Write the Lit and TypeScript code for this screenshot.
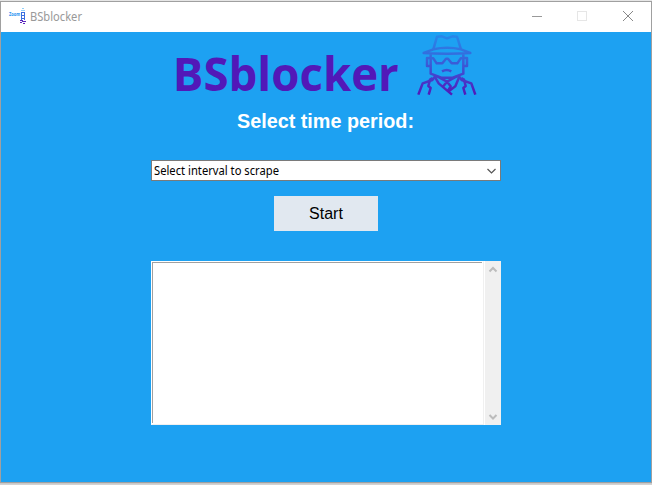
import { LitElement, html, css } from "lit";
import { customElement } from "lit/decorators.js";

@customElement("title-bar")
class TitleBar extends LitElement {
  static styles = css`
    :host { display: flex; height: 30px; background: #fff; flex: none; }
    svg { display: block; }
    .icon { margin: 6px 4px 0 7px; flex: none; }
    .title { flex: 1; }
    .name { font: 12px "Noto Sans", sans-serif; fill: #999; }
    .mini { font: bold 6px "Noto Sans", sans-serif; fill: #1d90f0; }
  `;
  render() {
    return html`
      <svg class="icon" width="18" height="18" viewBox="0 0 18 18">
        <text class="mini" x="1" y="8.3" textLength="11" lengthAdjust="spacingAndGlyphs">Zoom</text>
        <path d="M14 0.5h2M13 2.5h4" stroke="#8fd0fa" />
        <path d="M13 4.5h4M13.5 4v8M16.5 4v8M13 7.5h4M13 10.5h4" stroke="#3b6fe0" fill="none" />
        <path d="M12 12.5h3M14 13.5h4M12 14.5h2M15 15.5h2" stroke="#5b25bd" />
      </svg>
      <svg class="title" height="30">
        <text class="name" x="0" y="19" textLength="52" lengthAdjust="spacingAndGlyphs">BSblocker</text>
      </svg>
      <svg width="138" height="30" viewBox="513 2 138 30" fill="none">
        <path d="M532 16.5h10" stroke="#999" />
        <rect x="577.5" y="11.5" width="9" height="9" stroke="#e6e6e6" />
        <path d="M623 11l10 10M633 11l-10 10" stroke="#888" />
      </svg>
    `;
  }
}

@customElement("brand-logo")
class BrandLogo extends LitElement {
  static styles = css`
    :host { display: flex; height: 70px; padding-right: 5px; }
    svg { display: block; overflow: visible; }
    .word { font: bold 46px "Open Sans", sans-serif; fill: #5218b8; }
  `;
  render() {
    return html`
      <svg width="247" height="70">
        <text class="word" x="7.8" y="59.3" textLength="226" lengthAdjust="spacingAndGlyphs">BSblocker</text>
      </svg>
      <svg width="70" height="66" viewBox="0 0 210 198" fill="none" stroke="url(#ink)" stroke-width="7.5" stroke-linejoin="round" stroke-linecap="butt">
        <defs>
          <linearGradient id="ink" gradientUnits="userSpaceOnUse" x1="0" y1="10" x2="0" y2="188">
            <stop offset="0" stop-color="#2788ea" />
            <stop offset=".35" stop-color="#346bdd" />
            <stop offset=".7" stop-color="#4540cc" />
            <stop offset="1" stop-color="#5218b8" />
          </linearGradient>
        </defs>
        <path d="M64 52L75 14L90 13L105 19L121 13L135 14L147 52" />
        <path d="M64 52Q105 43 147 52L175 63Q105 67 35 63Z" />
        <path d="M56 67V125L88 137H122L154 125V67" />
        <path d="M56 78H45V102H56M154 78H165V102H154" />
        <path d="M58 79L64 79L74 94H91L102 80H108L119 94H136L146 79H152" />
        <path d="M90 118Q104 110 118 118" />
        <path d="M70 132L61 144L32 154L19 188M140 132L149 144L178 154L190 188" />
        <path d="M62 138L54 143L49 162L56 168L50 188M148 138L156 143L161 162L154 168L160 188" />
        <path d="M68 134L80 154L120 188M73 132L105 149L137 132M142 134L130 163L112 176M105 149L94 163M105 149L116 163L108 176" />
      </svg>
    `;
  }
}

@customElement("app-root")
class AppRoot extends LitElement {
  static styles = css`
    :host { display: block; box-sizing: border-box; height: 485px; padding-top: 1px; overflow: hidden; background: linear-gradient(#e6e6e6 0 1px, #bbb 1px 483px, #c4c4c4 483px, #d8d8d8); }
    .window { display: flex; flex-direction: column; box-sizing: border-box; height: 482px; border: 1px solid #a0a0a0; background: #1da1f2; }
    .body { flex: 1; display: flex; flex-direction: column; align-items: center; }
    svg { display: block; }
    .heading { font: bold 20px "Liberation Sans", Arial, sans-serif; fill: #fff; }
    .select { display: flex; justify-content: space-between; box-sizing: border-box; width: 350px; height: 21px; margin-top: 26px; background: #fff; border: 1px solid #7a7a7a; }
    .option { font: 12px "Noto Sans", sans-serif; fill: #000; }
    .start { width: 104px; height: 35px; margin-top: 15px; background: #e1e8f0; text-align: center; font: 16px/35px "Liberation Sans", Arial, sans-serif; color: #000; }
    .output { display: flex; box-sizing: border-box; width: 350px; height: 164px; margin-top: 30px; background: #fff; }
    .field { flex: 1; box-sizing: border-box; margin: 0 1px 0 0; border: 1px solid #f0f0f0; border-left-color: #fff; border-top-color: #fff; }
    .inner { box-sizing: border-box; height: 161px; margin-right: 1px; border-left: 1px solid #a0a0a0; border-top: 1px solid #a0a0a0; }
    .scroll { display: flex; flex-direction: column; justify-content: space-between; width: 16px; background: #f0f0f0; }
  `;
  render() {
    return html`
      <div class="window">
        <title-bar></title-bar>
        <div class="body">
          <brand-logo></brand-logo>
          <svg width="180" height="32">
            <text class="heading" x="1" y="26" textLength="177" lengthAdjust="spacingAndGlyphs">Select time period:</text>
          </svg>
          <div class="select">
            <svg width="200" height="19">
              <text class="option" x="2" y="14" textLength="125" lengthAdjust="spacingAndGlyphs">Select interval to scrape</text>
            </svg>
            <svg width="17" height="19" fill="none" stroke="#555" stroke-width="1.2"><path d="M4.5 8l4 4 4-4" /></svg>
          </div>
          <div class="start">Start</div>
          <div class="output">
            <div class="field"><div class="inner"></div></div>
            <div class="scroll">
              <svg width="16" height="17" fill="none" stroke="#bcbcbc" stroke-width="2"><path d="M4.5 10.5L8 7l3.5 3.5" /></svg>
              <svg width="16" height="17" fill="none" stroke="#bcbcbc" stroke-width="2"><path d="M4.5 7L8 10.5L11.5 7" /></svg>
            </div>
          </div>
        </div>
      </div>
    `;
  }
}
